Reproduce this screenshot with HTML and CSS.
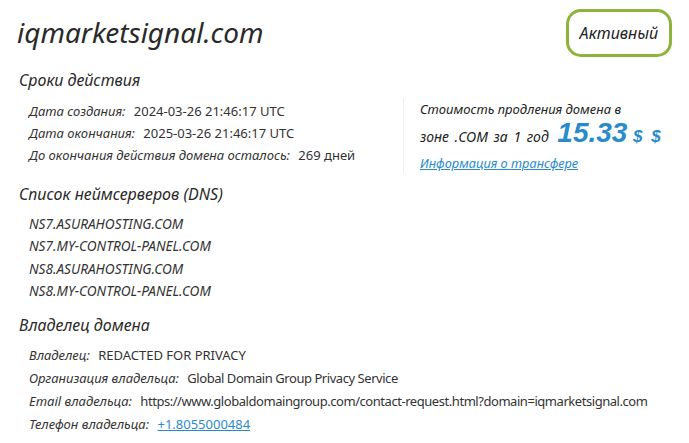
FILE: index.html
```html
<!DOCTYPE html>
<html lang="ru">
<head>
  <meta charset="UTF-8">
  <meta name="viewport" content="width=device-width, initial-scale=1.0">
  <title>iqmarketsignal.com — WHOIS</title>
  <link rel="stylesheet" href="styles.css">
</head>
<body>
  <div class="whois">
    <div class="head">
      <h1 class="domain">iqmarketsignal.com</h1>
      <div class="status">Активный</div>
    </div>

    <h2>Сроки действия</h2>
    <div class="terms">
      <div class="rows">
        <div class="row"><span class="label">Дата создания:</span> 2024-03-26 21:46:17 UTC</div>
        <div class="row"><span class="label">Дата окончания:</span> 2025-03-26 21:46:17 UTC</div>
        <div class="row"><span class="label">До окончания действия домена осталось:</span> 269 дней</div>
      </div>
      <div class="renew">
        <div class="renew-line">Стоимость продления домена в</div>
        <div class="renew-line price-line">зоне .COM за 1 год <span class="price">15.33</span> <span class="cur">$ $</span></div>
        <a href="#" class="transfer">Информация о трансфере</a>
      </div>
    </div>

    <h2 class="dns-title">Список неймсерверов (DNS)</h2>
    <ul class="ns">
      <li>NS7.ASURAHOSTING.COM</li>
      <li>NS7.MY-CONTROL-PANEL.COM</li>
      <li>NS8.ASURAHOSTING.COM</li>
      <li>NS8.MY-CONTROL-PANEL.COM</li>
    </ul>

    <h2>Владелец домена</h2>
    <div class="rows owner">
      <div class="row"><span class="label">Владелец:</span> REDACTED FOR PRIVACY</div>
      <div class="row"><span class="label">Организация владельца:</span> <span class="tight">Global Domain Group Privacy Service</span></div>
      <div class="row"><span class="label">Email владельца:</span> <span class="tight">https://www.globaldomaingroup.com/contact-request.html?domain=iqmarketsignal.com</span></div>
      <div class="row"><span class="label">Телефон владельца:</span> <a href="#" class="phone">+1.8055000484</a></div>
    </div>
  </div>
</body>
</html>
```

FILE: styles.css
```css
* { box-sizing: border-box; }
body {
  margin: 0;
  background: #fff;
  color: #333;
  font-family: "Noto Sans", "Open Sans", sans-serif;
}
.whois { padding: 9px 16px 0 17px; }
.head {
  display: flex;
  justify-content: space-between;
  align-items: flex-start;
}
.domain {
  margin: 4px 0 0;
  font-size: 28px;
  font-weight: 400;
  font-style: italic;
  color: #2a2a2a;
}
.status {
  margin-right: 1px;
  padding: 10px 11px;
  border: 3px solid #8db33a;
  border-radius: 15px;
  font-size: 16px;
  line-height: 22px;
  font-style: italic;
  color: #222;
}
h2 {
  margin: 12px 0 0 2px;
  font-size: 16px;
  font-weight: 400;
  font-style: italic;
  color: #2a2a2a;
}
.dns-title { margin-top: 10px; }
.terms {
  display: flex;
  margin-top: 9px;
}
.rows { padding-left: 12px; }
.terms .rows { width: 386px; }
.row {
  font-size: 13px;
  line-height: 22px;
  color: #333;
  white-space: nowrap;
}
.label {
  font-style: italic;
  margin-right: 5px;
}
.tight { letter-spacing: -0.45px; }

/* renewal price box */
.renew {
  border-left: 1px solid #eee;
  padding: 0 0 0 16px;
  margin-top: -2px;
}
.renew-line {
  font-size: 13px;
  font-style: italic;
  line-height: 22px;
  color: #222;
  white-space: nowrap;
}
.price-line {
  font-size: 14px;
  line-height: 26px;
  word-spacing: 2px;
}
.price {
  margin-left: 3px;
  font-family: "Liberation Sans", Arial, sans-serif;
  font-size: 28px;
  font-weight: 700;
  color: #2a8bcb;
}
.cur {
  font-family: "Liberation Sans", Arial, sans-serif;
  font-size: 17px;
  font-weight: 700;
  letter-spacing: 1px;
  color: #2a8bcb;
}
.transfer, .phone {
  color: #2a8bcb;
  text-decoration: underline;
}
.transfer {
  display: inline-block;
  margin-top: 4px;
  font-size: 12.8px;
  font-style: italic;
}
.ns {
  list-style: none;
  margin: 8px 0 0;
  padding: 0 0 0 12px;
}
.ns li {
  font-size: 13.6px;
  line-height: 22.3px;
  font-style: italic;
}
.owner { margin-top: 8px; }
.owner .row { line-height: 23px; }
```
